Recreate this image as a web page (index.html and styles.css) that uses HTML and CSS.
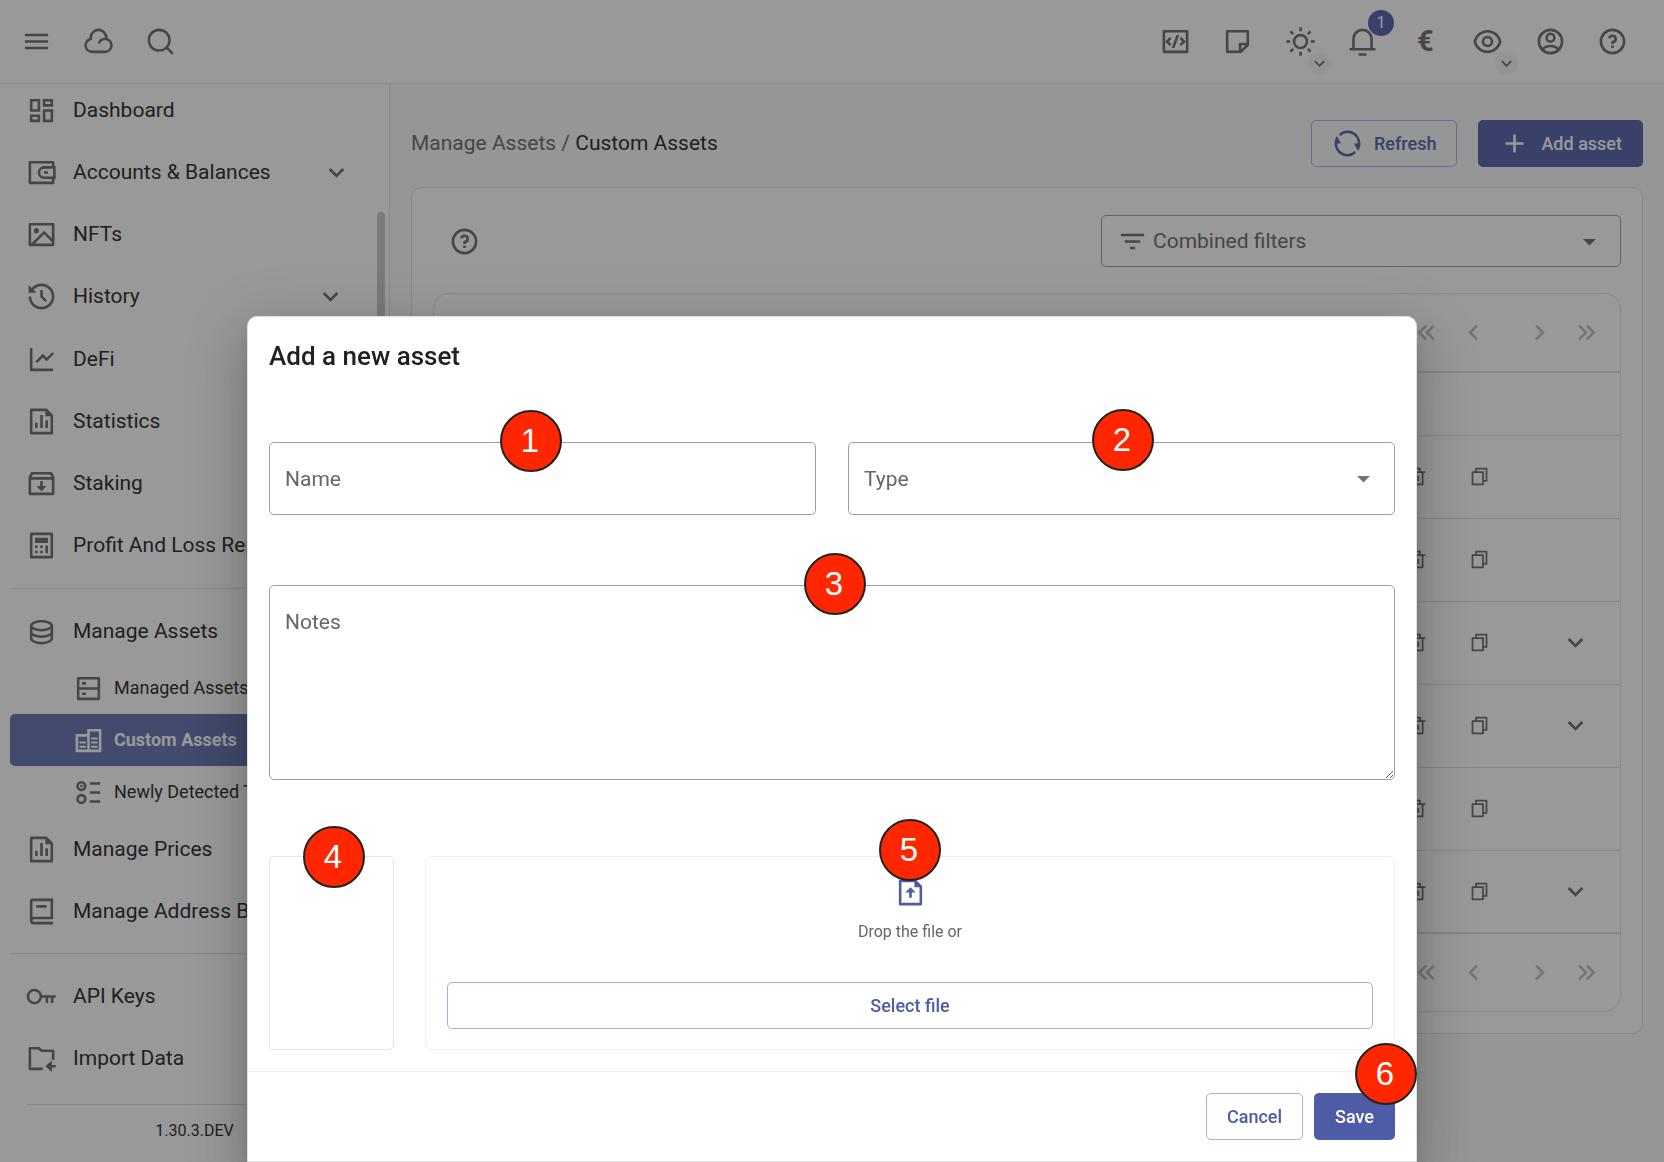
FILE: index.html
```html
<!DOCTYPE html>
<html lang="en">
<head>
<meta charset="utf-8">
<title>Custom Assets</title>
<link rel="stylesheet" href="styles.css">
</head>
<body>
<svg class="sprite" aria-hidden="true">
  <symbol id="menu" viewBox="0 0 24 24"><path d="M3 6H21V8H3V6M3 11H21V13H3V11M3 16H21V18H3V16Z"/></symbol>
  <symbol id="cloud" viewBox="0 0 24 24"><path d="M17 21H7A6 6 0 0 1 5.008 9.339a7 7 0 1 1 13.984 0A6 6 0 0 1 17 21zm0-12a5 5 0 1 0-9.994.243l.07 1.488-1.404.494A4.002 4.002 0 0 0 7 19h10a4 4 0 1 0-3.796-5.265l-1.898-.633A6.003 6.003 0 0 1 17 9z"/></symbol>
  <symbol id="search" viewBox="0 0 24 24"><path d="M18.031 16.617l4.283 4.282-1.415 1.415-4.282-4.283A8.96 8.96 0 0 1 11 20c-4.968 0-9-4.032-9-9s4.032-9 9-9 9 4.032 9 9a8.96 8.96 0 0 1-1.969 5.617zm-2.006-.742A6.977 6.977 0 0 0 18 11c0-3.868-3.133-7-7-7-3.868 0-7 3.132-7 7 0 3.867 3.132 7 7 7a6.977 6.977 0 0 0 4.875-1.975l.15-.15z"/></symbol>
  <symbol id="code" viewBox="0 0 24 24"><path d="M3 3h18a1 1 0 0 1 1 1v16a1 1 0 0 1-1 1H3a1 1 0 0 1-1-1V4a1 1 0 0 1 1-1zm1 2v14h16V5H4zm16 7l-3.536 3.536-1.414-1.415L17.172 12 15.05 9.879l1.414-1.415L20 12zM6.828 12l2.122 2.121-1.414 1.415L4 12l3.536-3.536L8.95 9.88 6.828 12zm4.416 5H9.116l3.64-10h2.128l-3.64 10z"/></symbol>
  <symbol id="note" viewBox="0 0 24 24"><path d="M21 15l-6 5.996L4.002 21A.998.998 0 0 1 3 20.007V3.993C3 3.445 3.445 3 3.993 3h16.014c.548 0 .993.456.993 1.002V15zM19 5H5v14h8v-5a1 1 0 0 1 .883-.993L14 13l5-.001V5zm-.829 9.999L15 15v3.169l3.171-3.17z"/></symbol>
  <symbol id="sun" viewBox="0 0 24 24"><path d="M12 18a6 6 0 1 1 0-12 6 6 0 0 1 0 12zm0-2a4 4 0 1 0 0-8 4 4 0 0 0 0 8zM11 1h2v3h-2V1zm0 19h2v3h-2v-3zM3.515 4.929l1.414-1.414L7.05 5.636 5.636 7.05 3.515 4.93zM16.95 18.364l1.414-1.414 2.121 2.121-1.414 1.414-2.121-2.121zm2.121-14.85l1.414 1.415-2.121 2.121-1.414-1.414 2.121-2.121zM5.636 16.95l1.414 1.414-2.121 2.121-1.414-1.414 2.121-2.121zM23 11v2h-3v-2h3zM4 11v2H1v-2h3z"/></symbol>
  <symbol id="bell" viewBox="0 0 24 24"><path d="M20 17h2v2H2v-2h2v-7a8 8 0 1 1 16 0v7zm-2 0v-7a6 6 0 1 0-12 0v7h12zm-9 4h6v2H9v-2z"/></symbol>
  <symbol id="eye" viewBox="0 0 24 24"><path d="M12 3c5.392 0 9.878 3.88 10.819 9-.94 5.12-5.427 9-10.819 9-5.392 0-9.878-3.88-10.819-9C2.121 6.88 6.608 3 12 3zm0 16a9.005 9.005 0 0 0 8.777-7 9.005 9.005 0 0 0-17.554 0A9.005 9.005 0 0 0 12 19zm0-2.5a4.5 4.5 0 1 1 0-9 4.5 4.5 0 0 1 0 9zm0-2a2.5 2.5 0 1 0 0-5 2.5 2.5 0 0 0 0 5z"/></symbol>
  <symbol id="account" viewBox="0 0 24 24"><g fill="none" stroke="currentColor" stroke-width="2"><circle cx="12" cy="12" r="9"/><circle cx="12" cy="9" r="3"/><path d="M5.6 18.2C7.2 16.4 9.400 15.500 12 15.500S16.800 16.400 18.400 18.200"/></g></symbol>
  <symbol id="help" viewBox="0 0 24 24"><path d="M12 22C6.477 22 2 17.523 2 12S6.477 2 12 2s10 4.477 10 10-4.477 10-10 10zm0-2a8 8 0 1 0 0-16 8 8 0 0 0 0 16zm-1-5h2v2h-2v-2zm2-1.645V14h-2v-1.500a1 1 0 0 1 1-1 1.500 1.500 0 1 0-1.471-1.794l-1.962-.393A3.501 3.501 0 1 1 13 13.355z"/></symbol>
  <symbol id="down" viewBox="0 0 24 24"><path d="M7.410 8.580L12 13.170L16.590 8.580L18 10L12 16L6 10Z"/></symbol>
  <symbol id="dashboard" viewBox="0 0 24 24"><path d="M13 21V11h8v10h-8zM3 13V3h8v10H3zm6-2V5H5v6h4zM3 21v-6h8v6H3zm2-2h4v-2H5v2zm10 0h4v-6h-4v6zM13 3h8v6h-8V3zm2 2v2h4V5h-4z"/></symbol>
  <symbol id="wallet" viewBox="0 0 24 24"><path d="M22 7h1v10h-1v3a1 1 0 0 1-1 1H3a1 1 0 0 1-1-1V4a1 1 0 0 1 1-1h18a1 1 0 0 1 1 1v3zm-2 10h-6a5 5 0 0 1 0-10h6V5H4v14h16v-2zm1-2V9h-7a3 3 0 0 0 0 6h7zm-7-4h3v2h-3v-2z"/></symbol>
  <symbol id="image" viewBox="0 0 24 24"><path d="M4.828 21l-.02.02-.021-.02H2.992A.993.993 0 0 1 2 20.007V3.993A1 1 0 0 1 2.992 3h18.016c.548 0 .992.445.992.993v16.014a1 1 0 0 1-.992.993H4.828zM20 15V5H4v14L14 9l6 6zm0 2.828l-6-6L6.828 19H20v-1.172zM8 11a2 2 0 1 1 0-4 2 2 0 0 1 0 4z"/></symbol>
  <symbol id="history" viewBox="0 0 24 24"><path d="M12 2c5.523 0 10 4.477 10 10s-4.477 10-10 10S2 17.523 2 12h2c0 4.418 3.582 8 8 8s8-3.582 8-8-3.582-8-8-8C9.536 4 7.332 5.114 5.865 6.865L8 9H2V3l2.447 2.446C6.280 3.336 8.984 2 12 2zm1 5v4.585l3.243 3.243-1.415 1.415L11 12.413V7h2z"/></symbol>
  <symbol id="chart" viewBox="0 0 24 24"><path d="M5 3v16h16v2H3V3h2zm15.293 3.293l1.414 1.414L16 13.414l-3-2.999-4.293 4.292-1.414-1.414L13 7.586l3 2.999 4.293-4.292z"/></symbol>
  <symbol id="stats" viewBox="0 0 24 24"><path d="M11 7h2v10h-2V7zm4 4h2v6h-2v-6zm-8 2h2v4H7v-4zm8-9H5v16h14V8h-4V4zM3 2.992C3 2.444 3.447 2 3.999 2H16l5 5v13.993A1 1 0 0 1 20.007 22H3.993A1 1 0 0 1 3 21.008V2.992z"/></symbol>
  <symbol id="inbox" viewBox="0 0 24 24"><path d="M20 3l2 4v13a1 1 0 0 1-1 1H3a1 1 0 0 1-1-1V7.004L4 3h16zm0 6H4v10h16V9zm-7 1v4h3l-4 4-4-4h3v-4h2zm5.764-5H5.236l-.999 2h15.527l-1-2z"/></symbol>
  <symbol id="calculator" viewBox="0 0 24 24"><path d="M4 2h16a1 1 0 0 1 1 1v18a1 1 0 0 1-1 1H4a1 1 0 0 1-1-1V3a1 1 0 0 1 1-1zm1 2v16h14V4H5zm2 2h10v4H7V6zm0 6h2v2H7v-2zm0 4h2v2H7v-2zm4-4h2v2h-2v-2zm0 4h2v2h-2v-2zm4-4h2v6h-2v-6z"/></symbol>
  <symbol id="database" viewBox="0 0 24 24"><path d="M5 12.500c0 .313.461.858 1.530 1.393C7.914 14.585 9.877 15 12 15c2.123 0 4.086-.415 5.470-1.107 1.069-.535 1.530-1.080 1.530-1.393v-2.171C17.350 11.349 14.827 12 12 12s-5.350-.652-7-1.671V12.500zm14 2.829C17.350 16.349 14.827 17 12 17s-5.350-.652-7-1.671V17.500c0 .313.461.858 1.530 1.393C7.914 19.585 9.877 20 12 20c2.123 0 4.086-.415 5.470-1.107 1.069-.535 1.530-1.080 1.530-1.393v-2.171zM3 17.500v-10C3 5.015 7.030 3 12 3s9 2.015 9 4.500v10c0 2.485-4.030 4.500-9 4.500s-9-2.015-9-4.500zm9-7.500c2.123 0 4.086-.415 5.470-1.107C18.539 8.358 19 7.813 19 7.500c0-.313-.461-.858-1.530-1.393C16.086 5.415 14.123 5 12 5c-2.123 0-4.086.415-5.470 1.107C5.461 6.642 5 7.187 5 7.500c0 .313.461.858 1.530 1.393C7.914 9.585 9.877 10 12 10z"/></symbol>
  <symbol id="server" viewBox="0 0 24 24"><path d="M5 11h14V5H5v6zm16-7v16a1 1 0 0 1-1 1H4a1 1 0 0 1-1-1V4a1 1 0 0 1 1-1h16a1 1 0 0 1 1 1zm-2 9H5v6h14v-6zM7 15h3v2H7v-2zm0-8h3v2H7V7z"/></symbol>
  <symbol id="buildings" viewBox="0 0 24 24"><path fill-rule="evenodd" d="M2 7h9V3h11v18H2V7zm2 2v10h7V9H4zm9-4v14h7V5h-7z"/><path d="M5 12.800h5v1.600H5zM5 16h5v1.600H5zM14 9.700h5v1.600h-5zM14 12.800h5v1.600h-5zM14 16h5v1.600h-5z"/></symbol>
  <symbol id="radios" viewBox="0 0 24 24"><g fill="none" stroke="currentColor" stroke-width="2"><circle cx="6.500" cy="7" r="3"/><circle cx="6.500" cy="17" r="3"/><path d="M13 5h8M13 12h8M13 19h8"/></g><circle cx="6.500" cy="7" r="1"/></symbol>
  <symbol id="book" viewBox="0 0 24 24"><path d="M21 18H6a1 1 0 0 0 0 2h15v2H6a3 3 0 0 1-3-3V4a2 2 0 0 1 2-2h16v16zM5 16.050c.162-.033.329-.05.5-.05H19V4H5v12.050zM16 9H8V7h8v2z"/></symbol>
  <symbol id="key" viewBox="0 0 24 24"><g fill="none" stroke="currentColor" stroke-width="2"><circle cx="6.500" cy="12" r="5"/><path d="M11.500 12H23M16.200 12v5M20.200 12v5"/></g></symbol>
  <symbol id="folder" viewBox="0 0 24 24"><path d="M22 13h-2V7h-8.414l-2-2H4v14h9v2H3a1 1 0 0 1-1-1V4a1 1 0 0 1 1-1h7.414l2 2H21a1 1 0 0 1 1 1v7zm-2 4h3v2h-3v3.500L15 18l5-4.500V17z"/></symbol>
  <symbol id="refresh" viewBox="0 0 24 24"><path d="M5.463 4.433A9.961 9.961 0 0 1 12 2c5.523 0 10 4.477 10 10 0 2.136-.67 4.116-1.810 5.740L17 12h3A8 8 0 0 0 6.460 6.228l-.997-1.795zm13.074 15.134A9.961 9.961 0 0 1 12 22C6.477 22 2 17.523 2 12c0-2.136.67-4.116 1.810-5.740L7 12H4a8 8 0 0 0 13.540 5.772l.997 1.795z"/></symbol>
  <symbol id="plus" viewBox="0 0 24 24"><path d="M11 11V5h2v6h6v2h-6v6h-2v-6H5v-2z"/></symbol>
  <symbol id="filter" viewBox="0 0 24 24"><path d="M6 13H18V11H6M3 6V8H21V6M10 18H14V16H10V18Z"/></symbol>
  <symbol id="caret" viewBox="0 0 24 24"><path d="M7 10L12 15L17 10H7Z"/></symbol>
  <symbol id="first" viewBox="0 0 24 24"><path d="M18.410 7.410L17 6L11 12L17 18L18.410 16.590L13.830 12L18.410 7.410M12.410 7.410L11 6L5 12L11 18L12.410 16.590L7.830 12L12.410 7.410Z"/></symbol>
  <symbol id="prev" viewBox="0 0 24 24"><path d="M15.410 16.580L10.830 12L15.410 7.410L14 6L8 12L14 18L15.410 16.580Z"/></symbol>
  <symbol id="next" viewBox="0 0 24 24"><path d="M8.590 16.580L13.170 12L8.590 7.410L10 6L16 12L10 18L8.590 16.580Z"/></symbol>
  <symbol id="last" viewBox="0 0 24 24"><path d="M5.590 7.410L7 6L13 12L7 18L5.590 16.590L10.170 12L5.590 7.410M11.590 7.410L13 6L19 12L13 18L11.590 16.590L16.170 12L11.590 7.410Z"/></symbol>
  <symbol id="trash" viewBox="0 0 24 24"><path d="M17 6h5v2h-2v13a1 1 0 0 1-1 1H5a1 1 0 0 1-1-1V8H2V6h5V3a1 1 0 0 1 1-1h8a1 1 0 0 1 1 1v3zm1 2H6v12h12V8zm-9 3h2v6H9v-6zm4 0h2v6h-2v-6zM9 4v2h6V4H9z"/></symbol>
  <symbol id="copy" viewBox="0 0 24 24"><path d="M7 6V3a1 1 0 0 1 1-1h12a1 1 0 0 1 1 1v14a1 1 0 0 1-1 1h-3v3c0 .552-.45 1-1.007 1H4.007A1.001 1.001 0 0 1 3 21l.003-14c0-.552.45-1 1.007-1H7zM5.003 8L5 20h10V8H5.003zM9 6h8v10h2V4H9v2z"/></symbol>
  <symbol id="upload" viewBox="0 0 24 24"><path d="M15 4H5v16h14V8h-4V4zM3 2.992C3 2.444 3.447 2 3.999 2H16l5 5v13.993A1 1 0 0 1 20.007 22H3.993A1 1 0 0 1 3 21.008V2.992zM13 12v4h-2v-4H8l4-4 4 4h-3z"/></symbol>
</svg>

<div class="app">
  <header class="topbar">
    <div class="topbar-left">
      <button class="tool" aria-label="Menu"><svg class="icon"><use href="#menu"/></svg></button>
      <button class="tool" aria-label="Cloud"><svg class="icon"><use href="#cloud"/></svg></button>
      <button class="tool" aria-label="Search"><svg class="icon"><use href="#search"/></svg></button>
    </div>
    <div class="topbar-right">
      <button class="tool" aria-label="Code"><svg class="icon"><use href="#code"/></svg></button>
      <button class="tool" aria-label="Notes"><svg class="icon"><use href="#note"/></svg></button>
      <button class="tool" aria-label="Theme"><svg class="icon"><use href="#sun"/></svg><span class="tool-more"><svg class="icon-small"><use href="#down"/></svg></span></button>
      <button class="tool" aria-label="Notifications"><svg class="icon"><use href="#bell"/></svg><span class="count">1</span></button>
      <button class="tool currency" aria-label="Currency">€</button>
      <button class="tool" aria-label="Privacy"><svg class="icon"><use href="#eye"/></svg><span class="tool-more"><svg class="icon-small"><use href="#down"/></svg></span></button>
      <button class="tool" aria-label="Account"><svg class="icon"><use href="#account"/></svg></button>
      <button class="tool" aria-label="Help"><svg class="icon"><use href="#help"/></svg></button>
    </div>
  </header>

  <div class="body">
    <aside class="sidebar">
      <nav class="nav">
        <div class="nav-group nav-main">
          <a class="nav-item" href="#"><svg class="icon"><use href="#dashboard"/></svg>Dashboard</a>
          <a class="nav-item nav-parent" href="#"><svg class="icon"><use href="#wallet"/></svg>Accounts &amp; Balances<svg class="icon nav-arrow"><use href="#down"/></svg></a>
          <a class="nav-item" href="#"><svg class="icon"><use href="#image"/></svg>NFTs</a>
          <a class="nav-item nav-parent nav-inset" href="#"><svg class="icon"><use href="#history"/></svg>History<svg class="icon nav-arrow"><use href="#down"/></svg></a>
          <a class="nav-item" href="#"><svg class="icon"><use href="#chart"/></svg>DeFi</a>
          <a class="nav-item" href="#"><svg class="icon"><use href="#stats"/></svg>Statistics</a>
          <a class="nav-item" href="#"><svg class="icon"><use href="#inbox"/></svg>Staking</a>
          <a class="nav-item" href="#"><svg class="icon"><use href="#calculator"/></svg>Profit And Loss Report</a>
        </div>
        <hr class="rule">
        <div class="nav-group">
          <a class="nav-item" href="#"><svg class="icon"><use href="#database"/></svg>Manage Assets</a>
          <a class="nav-item nav-sub" href="#"><svg class="icon"><use href="#server"/></svg>Managed Assets</a>
          <a class="nav-item nav-sub nav-active" href="#"><svg class="icon"><use href="#buildings"/></svg>Custom Assets</a>
          <a class="nav-item nav-sub" href="#"><svg class="icon"><use href="#radios"/></svg>Newly Detected Tokens</a>
          <a class="nav-item" href="#"><svg class="icon"><use href="#stats"/></svg>Manage Prices</a>
          <a class="nav-item" href="#"><svg class="icon"><use href="#book"/></svg>Manage Address Book</a>
        </div>
        <hr class="rule">
        <div class="nav-group">
          <a class="nav-item" href="#"><svg class="icon"><use href="#key"/></svg>API Keys</a>
          <a class="nav-item" href="#"><svg class="icon"><use href="#folder"/></svg>Import Data</a>
        </div>
      </nav>
      <footer class="version">1.30.3.DEV</footer>
      <span class="scroll-thumb"></span>
    </aside>

    <main class="content">
      <div class="page-head">
        <div class="crumbs"><a class="crumb" href="#">Manage Assets</a> / <span class="crumb-current">Custom Assets</span></div>
        <button class="btn btn-outline"><svg class="icon"><use href="#refresh"/></svg>Refresh</button>
        <button class="btn btn-primary"><svg class="icon"><use href="#plus"/></svg>Add asset</button>
      </div>
      <section class="card">
        <div class="filters">
          <button class="tool" aria-label="Filter help"><svg class="icon"><use href="#help"/></svg></button>
          <div class="filter-box">
            <svg class="icon"><use href="#filter"/></svg>
            <input class="filter-input" type="text" placeholder="Combined filters" aria-label="Combined filters">
            <svg class="icon"><use href="#caret"/></svg>
          </div>
        </div>
        <div class="table-card">
          <div class="pager">
            <button class="page-btn" aria-label="First page" disabled><svg class="icon"><use href="#first"/></svg></button>
            <button class="page-btn" aria-label="Previous page" disabled><svg class="icon"><use href="#prev"/></svg></button>
            <button class="page-btn page-next" aria-label="Next page" disabled><svg class="icon"><use href="#next"/></svg></button>
            <button class="page-btn" aria-label="Last page" disabled><svg class="icon"><use href="#last"/></svg></button>
          </div>
          <table class="assets">
            <thead><tr><th></th><th class="col-action"></th><th class="col-action"></th><th class="col-gap"></th><th class="col-expand"></th></tr></thead>
            <tbody>
              <tr><td></td><td><button class="row-btn" aria-label="Delete"><svg class="icon-row"><use href="#trash"/></svg></button></td><td><button class="row-btn" aria-label="Copy"><svg class="icon-row"><use href="#copy"/></svg></button></td><td></td><td></td></tr>
              <tr><td></td><td><button class="row-btn" aria-label="Delete"><svg class="icon-row"><use href="#trash"/></svg></button></td><td><button class="row-btn" aria-label="Copy"><svg class="icon-row"><use href="#copy"/></svg></button></td><td></td><td></td></tr>
              <tr><td></td><td><button class="row-btn" aria-label="Delete"><svg class="icon-row"><use href="#trash"/></svg></button></td><td><button class="row-btn" aria-label="Copy"><svg class="icon-row"><use href="#copy"/></svg></button></td><td></td><td><button class="row-btn" aria-label="Expand"><svg class="icon"><use href="#down"/></svg></button></td></tr>
              <tr><td></td><td><button class="row-btn" aria-label="Delete"><svg class="icon-row"><use href="#trash"/></svg></button></td><td><button class="row-btn" aria-label="Copy"><svg class="icon-row"><use href="#copy"/></svg></button></td><td></td><td><button class="row-btn" aria-label="Expand"><svg class="icon"><use href="#down"/></svg></button></td></tr>
              <tr><td></td><td><button class="row-btn" aria-label="Delete"><svg class="icon-row"><use href="#trash"/></svg></button></td><td><button class="row-btn" aria-label="Copy"><svg class="icon-row"><use href="#copy"/></svg></button></td><td></td><td></td></tr>
              <tr><td></td><td><button class="row-btn" aria-label="Delete"><svg class="icon-row"><use href="#trash"/></svg></button></td><td><button class="row-btn" aria-label="Copy"><svg class="icon-row"><use href="#copy"/></svg></button></td><td></td><td><button class="row-btn" aria-label="Expand"><svg class="icon"><use href="#down"/></svg></button></td></tr>
            </tbody>
          </table>
          <div class="pager">
            <button class="page-btn" aria-label="First page" disabled><svg class="icon"><use href="#first"/></svg></button>
            <button class="page-btn" aria-label="Previous page" disabled><svg class="icon"><use href="#prev"/></svg></button>
            <button class="page-btn page-next" aria-label="Next page" disabled><svg class="icon"><use href="#next"/></svg></button>
            <button class="page-btn" aria-label="Last page" disabled><svg class="icon"><use href="#last"/></svg></button>
          </div>
        </div>
      </section>
    </main>
  </div>
</div>

<div class="overlay">
  <form class="modal" role="dialog" aria-labelledby="modal-title">
    <h2 class="modal-title" id="modal-title">Add a new asset</h2>
    <div class="modal-body">
      <div class="field-row">
        <div class="field">
          <input class="control" type="text" placeholder="Name" aria-label="Name">
          <span class="marker marker-name">1</span>
        </div>
        <div class="field">
          <select class="control" aria-label="Type"><option>Type</option></select>
          <svg class="icon select-caret"><use href="#caret"/></svg>
          <span class="marker marker-type">2</span>
        </div>
      </div>
      <div class="field">
        <textarea class="control notes" placeholder="Notes" aria-label="Notes"></textarea>
        <span class="marker marker-notes">3</span>
      </div>
      <div class="upload-row">
        <div class="preview"><span class="marker marker-preview">4</span></div>
        <div class="dropzone">
          <svg class="icon drop-icon"><use href="#upload"/></svg>
          <p class="drop-text">Drop the file or</p>
          <button class="btn btn-outline btn-wide" type="button">Select file</button>
          <span class="marker marker-drop">5</span>
        </div>
      </div>
    </div>
    <div class="modal-actions">
      <button class="btn btn-outline" type="button">Cancel</button>
      <button class="btn btn-primary" type="button">Save</button>
      <span class="marker marker-save">6</span>
    </div>
  </form>
</div>
</body>
</html>
```

FILE: styles.css
```css
:root {
  --primary: #4e5ba6;
  --primary-line: #a9afd8;
  --text: #212121;
  --muted: #666;
  --line: #e0e0e0;
}

* { box-sizing: border-box; }

body {
  margin: 0;
  overflow: hidden;
  background: #fafafa;
  color: var(--text);
  font-family: Roboto, "Liberation Sans", sans-serif;
  font-size: 21px;
  line-height: 31px;
}

button, input, select, textarea { font: inherit; }
button { border: 0; padding: 0; background: none; color: inherit; }
a { color: inherit; text-decoration: none; }
svg { display: block; fill: currentColor; }

.sprite { display: none; }
.icon { width: 31px; height: 31px; flex: none; }
.icon-small { width: 21px; height: 21px; }
.icon-row { width: 21px; height: 21px; }

.app { display: flex; flex-direction: column; height: 100vh; }

/* Top bar */
.topbar {
  display: flex;
  justify-content: space-between;
  flex: none;
  height: 84px;
  padding: 0 20px 0 5px;
  border-bottom: 1px solid var(--line);
  background: #fff;
  color: var(--muted);
}
.topbar-left { display: flex; }
.topbar-right { display: flex; width: 500px; }
.topbar-right .tool { flex: 1; }
.tool {
  position: relative;
  display: flex;
  align-items: center;
  justify-content: center;
  width: 62px;
  color: var(--muted);
}
.currency { font-size: 29px; font-weight: 700; }
.tool-more {
  position: absolute;
  right: 1px;
  bottom: 8px;
  display: flex;
  align-items: center;
  justify-content: center;
  width: 23px;
  height: 23px;
  border-radius: 50%;
  background: #f5f5f5;
}
.count {
  position: absolute;
  top: 10px;
  right: 0;
  width: 26px;
  height: 26px;
  border-radius: 50%;
  background: var(--primary);
  color: #fff;
  font-size: 16px;
  line-height: 26px;
  text-align: center;
}

.body { display: flex; flex: 1; min-height: 0; }

/* Sidebar */
.sidebar {
  position: relative;
  display: flex;
  flex-direction: column;
  flex: none;
  width: 390px;
  overflow: hidden;
  border-right: 1px solid var(--line);
  background: #fff;
}
.nav { flex: 1; padding: 0 10px; margin-top: -5px; }
.nav-group { display: grid; grid-auto-rows: auto; }
.nav-main { height: 498px; }
.nav-item {
  display: flex;
  align-items: center;
  gap: 16px;
  min-height: 62px;
  padding: 0 16px;
  white-space: nowrap;
}
.nav-item .icon { color: var(--muted); }
.nav-parent { padding-right: 27px; }
.nav-inset { padding-right: 33px; }
.nav-arrow { margin-left: auto; }
.nav-sub {
  gap: 10px;
  min-height: 52px;
  padding-left: 63px;
  font-size: 18px;
  line-height: 26px;
}
.nav-active {
  border-radius: 5px;
  background: #616dae;
  color: #fff;
  font-weight: 700;
}
.nav-active .icon { color: #fff; }
.rule { margin: 11px 0; border: 0; border-top: 1px solid var(--line); }
.version {
  margin: 0 26px;
  height: 58px;
  border-top: 1px solid var(--line);
  font-size: 16px;
  line-height: 52px;
  text-align: center;
}
.scroll-thumb {
  position: absolute;
  top: 128px;
  right: 4px;
  width: 8px;
  height: 500px;
  border-radius: 4px;
  background: #c6c6c6;
}

/* Page */
.content { flex: 1; min-width: 0; padding: 36px 21px 0; }
.page-head { display: flex; align-items: center; gap: 21px; margin-bottom: 20px; }
.crumbs { flex: 1; color: var(--muted); }
.crumb-current { color: var(--text); }

.btn {
  display: inline-flex;
  align-items: center;
  justify-content: center;
  gap: 11px;
  height: 47px;
  padding: 0 20px;
  border: 1px solid transparent;
  border-radius: 5px;
  font-size: 18px;
  font-weight: 500;
  line-height: 26px;
}
.btn-outline { border-color: var(--primary-line); color: var(--primary); }
.btn-primary { background: var(--primary); color: #fff; }
.btn-wide { width: 100%; }

.card {
  padding: 27px 21px 21px;
  border: 1px solid var(--line);
  border-radius: 10px;
  background: #fff;
}
.filters { display: flex; justify-content: space-between; margin-bottom: 26px; }
.filter-box {
  display: flex;
  align-items: center;
  gap: 5px;
  width: 520px;
  height: 52px;
  padding: 0 15px;
  border: 1px solid #9e9e9e;
  border-radius: 5px;
  color: var(--muted);
}
.filter-input {
  flex: 1;
  min-width: 0;
  padding: 0;
  border: 0;
  background: none;
}
::placeholder { color: var(--muted); opacity: 1; }

.table-card { border: 1px solid var(--line); border-radius: 16px; }
.pager { display: flex; justify-content: flex-end; padding: 15px 10px; }
.page-btn {
  display: flex;
  align-items: center;
  justify-content: center;
  width: 47px;
  height: 47px;
  color: #bdbdbd;
}
.page-next { margin-left: 19px; }

.assets {
  width: 100%;
  border-collapse: collapse;
  table-layout: fixed;
  border-top: 2px solid var(--line);
  border-bottom: 2px solid var(--line);
}
.assets th { height: 63px; padding: 0; }
.assets td { height: 83px; padding: 0; border-top: 1px solid var(--line); }
.col-action { width: 63px; }
.col-gap { width: 19px; }
.col-expand { width: 90px; }
.row-btn {
  display: flex;
  align-items: center;
  justify-content: center;
  width: 100%;
  height: 40px;
  color: var(--muted);
}

/* Dialog */
.overlay {
  position: fixed;
  inset: 0;
  display: flex;
  align-items: flex-end;
  justify-content: center;
  background: rgba(33, 33, 33, .46);
}
.modal {
  width: 1170px;
  border: 1px solid var(--line);
  border-radius: 10px 10px 0 0;
  background: #fff;
  box-shadow: 0 14px 20px -9px rgba(0, 0, 0, .2), 0 31px 49px 4px rgba(0, 0, 0, .14), 0 12px 60px 10px rgba(0, 0, 0, .12);
}
.modal-title {
  margin: 0;
  padding: 18px 21px;
  font-size: 26px;
  font-weight: 500;
  line-height: 42px;
}
.modal-body { padding: 47px 21px 21px; }
.field-row { display: grid; grid-template-columns: 1fr 1fr; gap: 32px; margin-bottom: 70px; }
.field { position: relative; }
.control {
  display: block;
  width: 100%;
  height: 73px;
  padding: 21px 15px 20px;
  border: 1px solid #9e9e9e;
  border-radius: 5px;
  background: #fff;
  color: var(--muted);
  appearance: none;
}
.notes { height: 195px; resize: vertical; }
.select-caret { position: absolute; top: 21px; right: 16px; color: #757575; }

.upload-row { display: grid; grid-template-columns: 125px 1fr; gap: 31px; margin-top: 76px; }
.preview { position: relative; border: 1px solid #e5e5e5; border-radius: 5px; }
.dropzone {
  position: relative;
  display: flex;
  flex-direction: column;
  align-items: center;
  padding: 20px 21px;
  border: 1px solid #f0f0f0;
  border-radius: 6px;
}
.drop-icon { color: var(--primary); }
.drop-text { margin: 8px 0 35px; color: var(--muted); font-size: 16px; }

.modal-actions {
  position: relative;
  display: flex;
  justify-content: flex-end;
  gap: 11px;
  padding: 21px;
  border-top: 1px solid #f0f0f0;
}

/* Numbered callouts over the dialog */
.marker {
  position: absolute;
  width: 62px;
  height: 62px;
  padding-right: 2px;
  border: 2px solid #222;
  border-radius: 50%;
  background: #ff2600;
  color: #fff;
  font-family: "Liberation Sans", Arial, sans-serif;
  font-size: 33px;
  line-height: 58px;
  text-align: center;
}
.marker-name { top: -32px; left: 231px; }
.marker-type { top: -33px; left: 244px; }
.marker-notes { top: -32px; left: 535px; }
.marker-preview { top: -31px; left: 33px; }
.marker-drop { top: -38px; left: 453px; }
.marker-save { top: -29px; right: -1px; }
```
